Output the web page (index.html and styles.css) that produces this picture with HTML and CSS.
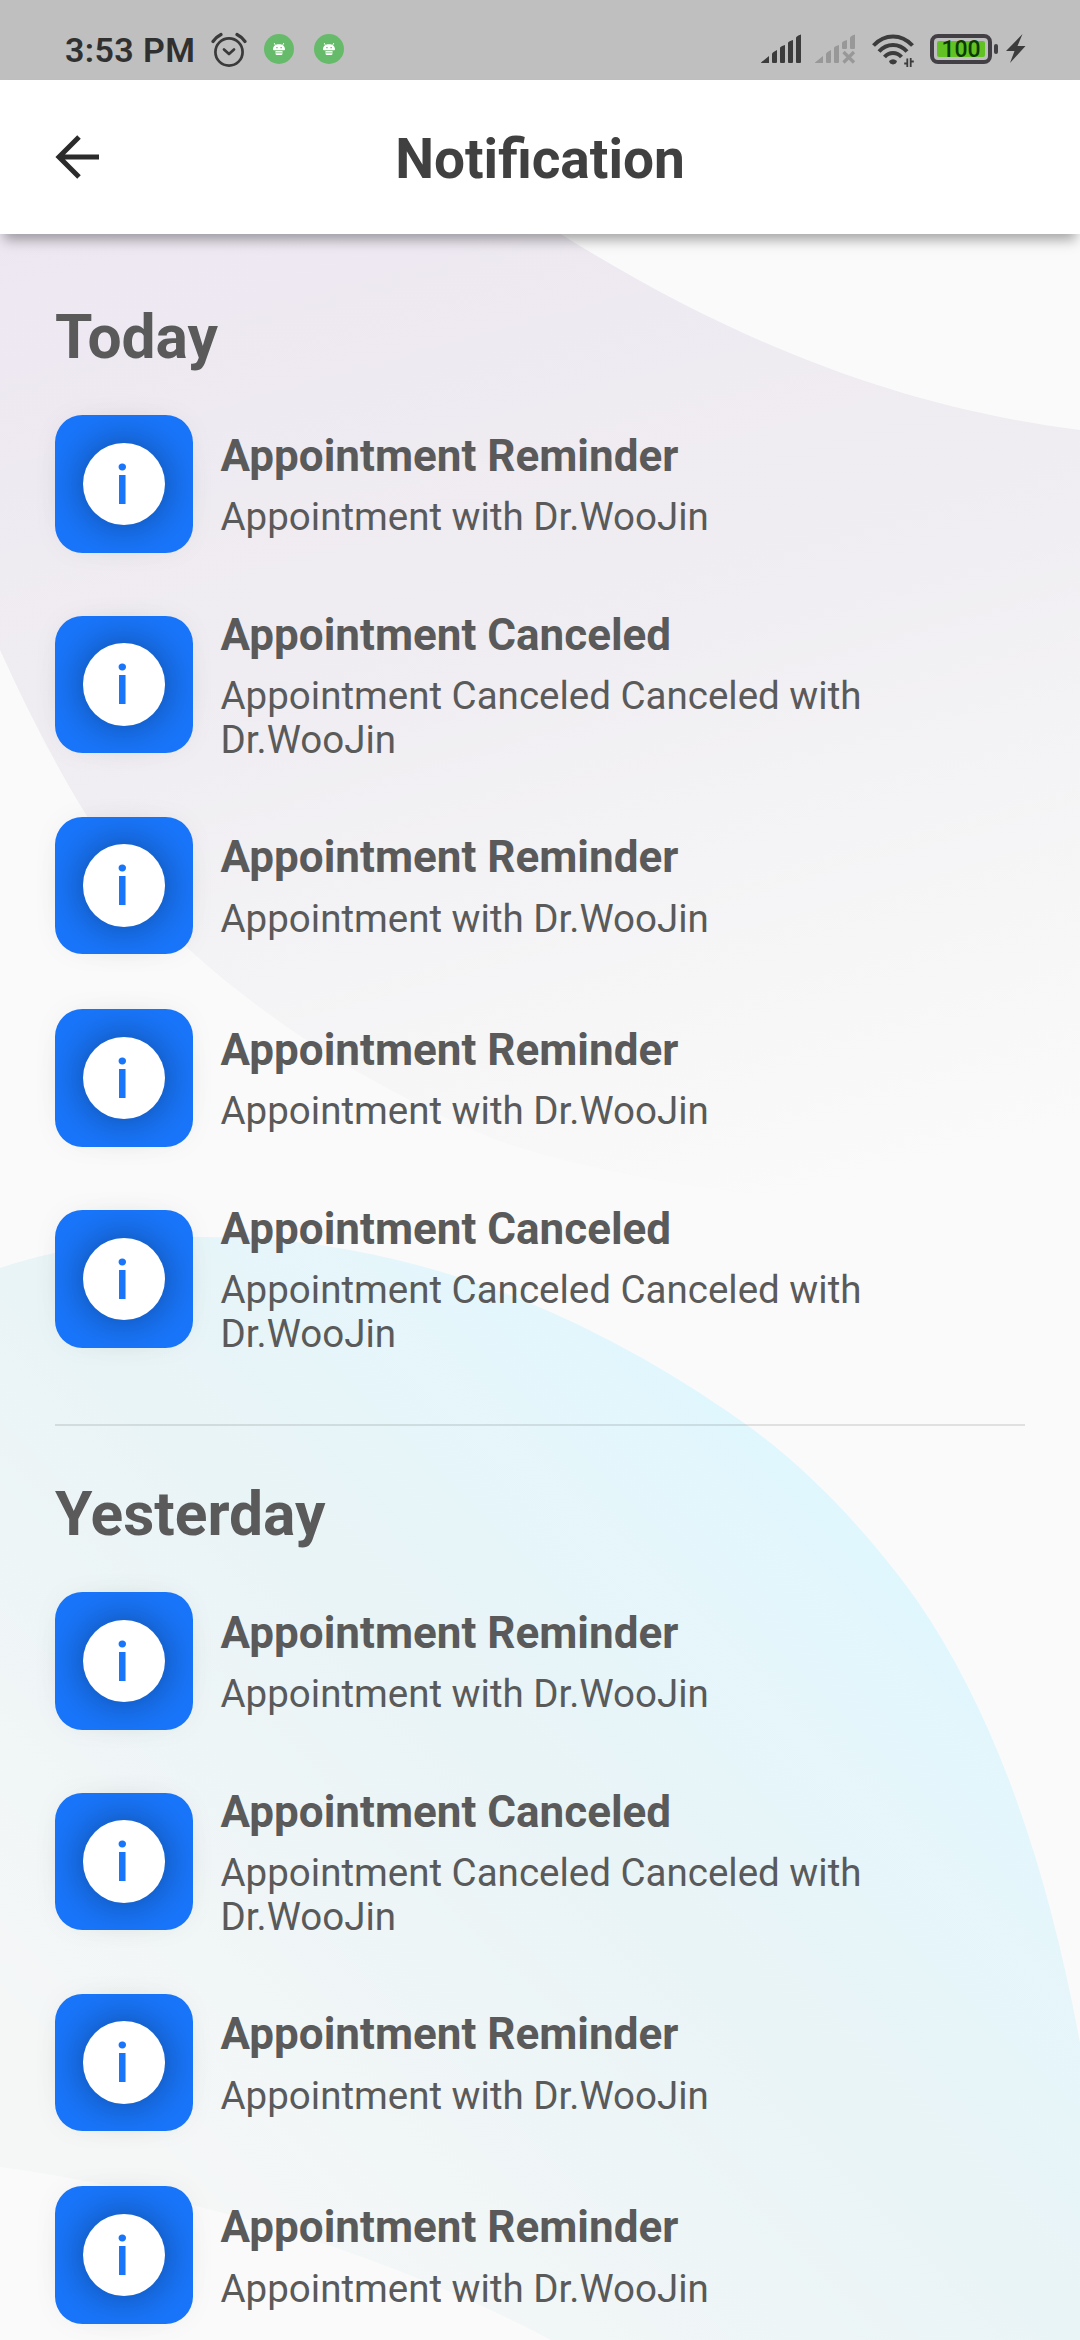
FILE: index.html
```html
<!DOCTYPE html>
<html lang="en">
<head>
    <meta charset="utf-8">
    <title>Notification</title>
    <link rel="stylesheet" href="styles.css">
</head>
<body>
    <svg class="backdrop" viewBox="0 0 1080 2340">
        <defs>
            <linearGradient id="lilac" gradientUnits="userSpaceOnUse" x1="250" y1="150" x2="560" y2="1270">
                <stop offset="0" stop-color="#ede7f1"/>
                <stop offset="0.5" stop-color="#f0eef2"/>
                <stop offset="0.8" stop-color="#f6f6f7"/>
                <stop offset="1" stop-color="#fafafa"/>
            </linearGradient>
            <linearGradient id="aqua" gradientUnits="userSpaceOnUse" x1="850" y1="1480" x2="170" y2="2160">
                <stop offset="0" stop-color="#dff7fe"/>
                <stop offset="0.18" stop-color="#e5f6fb"/>
                <stop offset="0.45" stop-color="#e9f4f6"/>
                <stop offset="1" stop-color="#f5f7f7"/>
            </linearGradient>
        </defs>
        <path fill="url(#lilac)" d="M0 200H508C700 328 880 405 1080 430V1220C850 1210 640 1190 496 1140C400 1100 290 1040 193 953C110 870 50 760 0 650Z"/>
        <path fill="url(#aqua)" d="M0 1268C70 1245 140 1237 207 1237C390 1237 570 1300 744 1423C810 1470 870 1535 916 1599C1000 1720 1050 1880 1080 2043V2340H551C400 2260 200 2195 0 2167Z"/>
    </svg>

    <div class="status-bar">
        <div class="status-left">
            <span class="clock">3:53 PM</span>
            <svg class="alarm" viewBox="0 0 36 36">
                <g fill="none" stroke="#3a3a3a" stroke-width="2.7" stroke-linecap="round" stroke-linejoin="round">
                    <circle cx="18" cy="20" r="13.6"/>
                    <path d="M13 17.500L18 22L23 17.500"/>
                    <path stroke-width="3.200" d="M2 9.500Q5 5 10 2.500M34 9.500Q31 5 26 2.500"/>
                </g>
            </svg>
            <svg class="droid" viewBox="0 0 30 30"><use href="#droid"/></svg>
            <svg class="droid" viewBox="0 0 30 30">
                <g id="droid">
                    <circle cx="15" cy="15" r="15" fill="#66bb6a"/>
                    <path fill="#fff" d="M9 15.500C9 12 11.500 10.300 15 10.300S21 12 21 15.500Q21 16.300 20 16.300H10Q9 16.300 9 15.500ZM11.500 17H18.500V19.500Q18.500 21 17 21H13Q11.500 21 11.500 19.500Z"/>
                    <path stroke="#fff" stroke-width="0.9" d="M10.200 9L11.500 11.500M19.800 9L18.500 11.500"/>
                    <path fill="#66bb6a" d="M12.300 13h1.300v1.200h-1.300zM16.500 13h1.300v1.200h-1.300zM11.500 18.500h7v0.700h-7z"/>
                </g>
            </svg>
        </div>
        <div class="status-right">
            <svg class="signal" viewBox="0 0 41 30" fill="#3c3c3c">
                <path d="M0 28.500L8 22V29H1Q0 29 0 28.500ZM11 20Q11 18.500 16 16V28Q16 29 15 29H12Q11 29 11 28ZM19 14Q19 12.500 24 11V28Q24 29 23 29H20Q19 29 19 28ZM27 9Q27 7.500 32 6V28Q32 29 31 29H28Q27 29 27 28ZM35 4Q35 2 40 0.500V28Q40 29 39 29H36Q35 29 35 28Z"/>
            </svg>
            <svg class="signal signal-off" viewBox="0 0 41 30" fill="#989898">
                <path d="M0 28.500L8 22V29H1Q0 29 0 28.500ZM11 20Q11 18.500 16 16V28Q16 29 15 29H12Q11 29 11 28ZM19 14Q19 12.500 24 11V28Q24 29 23 29H20Q19 29 19 28ZM27 9Q27 7.500 32 6V14Q32 15 31 15H28Q27 15 27 14ZM35 4Q35 2 40 0.500V14Q40 15 39 15H36Q35 15 35 14Z"/>
                <path fill="none" stroke="#989898" stroke-width="3.200" d="M28.500 18L39 28.500M39 18L28.500 28.500"/>
            </svg>
            <svg class="wifi" viewBox="0 0 42 34">
                <g fill="none" stroke="#3c3c3c" stroke-width="4">
                    <path d="M1.500 11.500Q10 2.500 21 2.500T40.500 11.500"/>
                    <path d="M7 17.500Q13 11 21 11T35 17.500"/>
                    <path d="M12.500 23Q16 19 21 19T29.500 23"/>
                </g>
                <path fill="#3c3c3c" d="M17 27Q21 23.500 25 27Q24.500 30 21 30.500Q17.500 30 17 27Z"/>
                <path fill="none" stroke="#3c3c3c" stroke-width="1.800" d="M35.300 33V24.500M32.200 29.500H35.300M38.700 24V33M38.700 27.500H41.800"/>
            </svg>
            <div class="battery"><span class="charge">100</span></div>
            <svg class="bolt" viewBox="0 0 20 30"><path fill="#3c3c3c" d="M16.500 0L0 17H8.500L4 29L19.500 12H11.500Z"/></svg>
        </div>
    </div>

    <div class="header">
        <svg class="back" viewBox="0 0 44 44"><path fill="none" stroke="#2b2b2b" stroke-width="5" d="M44 22H4M24 2L4 22L24 42"/></svg>
        <h1>Notification</h1>
    </div>

    <div class="content">
        <h2>Today</h2>
        <div class="list">
            <div class="item">
                <div class="icon"><span class="info">i</span></div>
                <div class="text">
                    <h3>Appointment Reminder</h3>
                    <p>Appointment with Dr.WooJin</p>
                </div>
            </div>
            <div class="item">
                <div class="icon"><span class="info">i</span></div>
                <div class="text">
                    <h3>Appointment Canceled</h3>
                    <p>Appointment Canceled Canceled with Dr.WooJin</p>
                </div>
            </div>
            <div class="item">
                <div class="icon"><span class="info">i</span></div>
                <div class="text">
                    <h3>Appointment Reminder</h3>
                    <p>Appointment with Dr.WooJin</p>
                </div>
            </div>
            <div class="item">
                <div class="icon"><span class="info">i</span></div>
                <div class="text">
                    <h3>Appointment Reminder</h3>
                    <p>Appointment with Dr.WooJin</p>
                </div>
            </div>
            <div class="item">
                <div class="icon"><span class="info">i</span></div>
                <div class="text">
                    <h3>Appointment Canceled</h3>
                    <p>Appointment Canceled Canceled with Dr.WooJin</p>
                </div>
            </div>
        </div>

        <hr>

        <h2>Yesterday</h2>
        <div class="list">
            <div class="item">
                <div class="icon"><span class="info">i</span></div>
                <div class="text">
                    <h3>Appointment Reminder</h3>
                    <p>Appointment with Dr.WooJin</p>
                </div>
            </div>
            <div class="item">
                <div class="icon"><span class="info">i</span></div>
                <div class="text">
                    <h3>Appointment Canceled</h3>
                    <p>Appointment Canceled Canceled with Dr.WooJin</p>
                </div>
            </div>
            <div class="item">
                <div class="icon"><span class="info">i</span></div>
                <div class="text">
                    <h3>Appointment Reminder</h3>
                    <p>Appointment with Dr.WooJin</p>
                </div>
            </div>
            <div class="item">
                <div class="icon"><span class="info">i</span></div>
                <div class="text">
                    <h3>Appointment Reminder</h3>
                    <p>Appointment with Dr.WooJin</p>
                </div>
            </div>
        </div>
    </div>
</body>
</html>
```
FILE: styles.css
```css
* {
    box-sizing: border-box;
}

body {
    margin: 0;
    width: 1080px;
    height: 2340px;
    overflow: hidden;
    position: relative;
    background-color: #fafafa;
    font-family: Roboto, sans-serif;
    color: #5a5a5a;
}

h1, h2, h3, p {
    margin: 0;
}

svg {
    display: block;
    flex-shrink: 0;
}

/* curved shapes behind the list */
.backdrop {
    position: absolute;
    top: 0;
    left: 0;
    width: 1080px;
    height: 2340px;
    z-index: -1;
}

.status-bar {
    display: flex;
    justify-content: space-between;
    height: 80px;
    padding: 18px 54px 0 65px;
    background-color: #bfbfbf;
}

.status-left, .status-right {
    display: flex;
    align-items: center;
    height: 62px;
}

.clock {
    padding-top: 2px;
    font-size: 34px;
    font-weight: 600;
    line-height: 40px;
    letter-spacing: 0.4px;
    color: #303030;
}

.alarm {
    width: 36px;
    height: 36px;
    margin-left: 16px;
    margin-top: 1px;
}

.droid {
    width: 30px;
    height: 30px;
    margin-left: 17px;
}

.droid + .droid {
    margin-left: 20px;
}

.signal {
    width: 41px;
    height: 30px;
}

.signal-off {
    margin-left: 13px;
}

.wifi {
    width: 42px;
    height: 34px;
    margin-left: 16px;
    margin-top: 3px;
}

.battery {
    position: relative;
    width: 62px;
    height: 30px;
    margin-left: 16px;
    padding: 3px;
    border: 4px solid #424044;
    border-radius: 8px;
}

.battery::after {
    content: "";
    position: absolute;
    top: 6px;
    right: -10px;
    width: 4px;
    height: 10px;
    border-radius: 2px;
    background-color: #424044;
}

.charge {
    display: block;
    height: 16px;
    border-radius: 2px;
    background-color: #62c224;
    color: #0c3a00;
    font-size: 23px;
    font-weight: 500;
    line-height: 18px;
    text-align: center;
}

.bolt {
    width: 20px;
    height: 30px;
    margin-left: 14px;
}

.header {
    display: grid;
    grid-template-columns: 44px 1fr 44px;
    align-items: center;
    height: 154px;
    padding: 0 55px;
    background-color: #fff;
    box-shadow: 0 10px 12px -4px rgba(0, 0, 0, 0.34);
}

.back {
    width: 44px;
    height: 44px;
}

h1 {
    padding-top: 3px;
    font-size: 55px;
    line-height: 64px;
    text-align: center;
    color: #404040;
}

.content {
    padding: 68px 55px 0;
}

h2 {
    font-size: 60.5px;
    line-height: 71px;
    margin-bottom: 42px;
}

.list {
    display: flex;
    flex-direction: column;
    gap: 55px;
}

.item {
    display: flex;
    align-items: center;
    gap: 28px;
}

.icon {
    display: flex;
    align-items: center;
    justify-content: center;
    flex-shrink: 0;
    width: 137.5px;
    height: 137.5px;
    border-radius: 27.5px;
    background-color: #1976fb;
    box-shadow: 0 0 28px rgba(0, 0, 0, 0.04);
}

.info {
    width: 82.5px;
    height: 82.5px;
    padding-right: 3px;
    border-radius: 50%;
    background-color: #fff;
    box-shadow: 0 0 42px rgba(0, 0, 0, 0.4);
    color: #1976fb;
    font-size: 55px;
    font-weight: 500;
    line-height: 85px;
    text-align: center;
}

.text {
    width: 690px;
    padding-top: 1px;
}

h3 {
    font-size: 44px;
    line-height: 52px;
}

p {
    margin-top: 13.7px;
    font-size: 38.5px;
    line-height: 43.8px;
}

hr {
    height: 1.5px;
    margin: 68px 0 53.5px;
    border: none;
    background-color: rgba(0, 0, 0, 0.1);
}
```
